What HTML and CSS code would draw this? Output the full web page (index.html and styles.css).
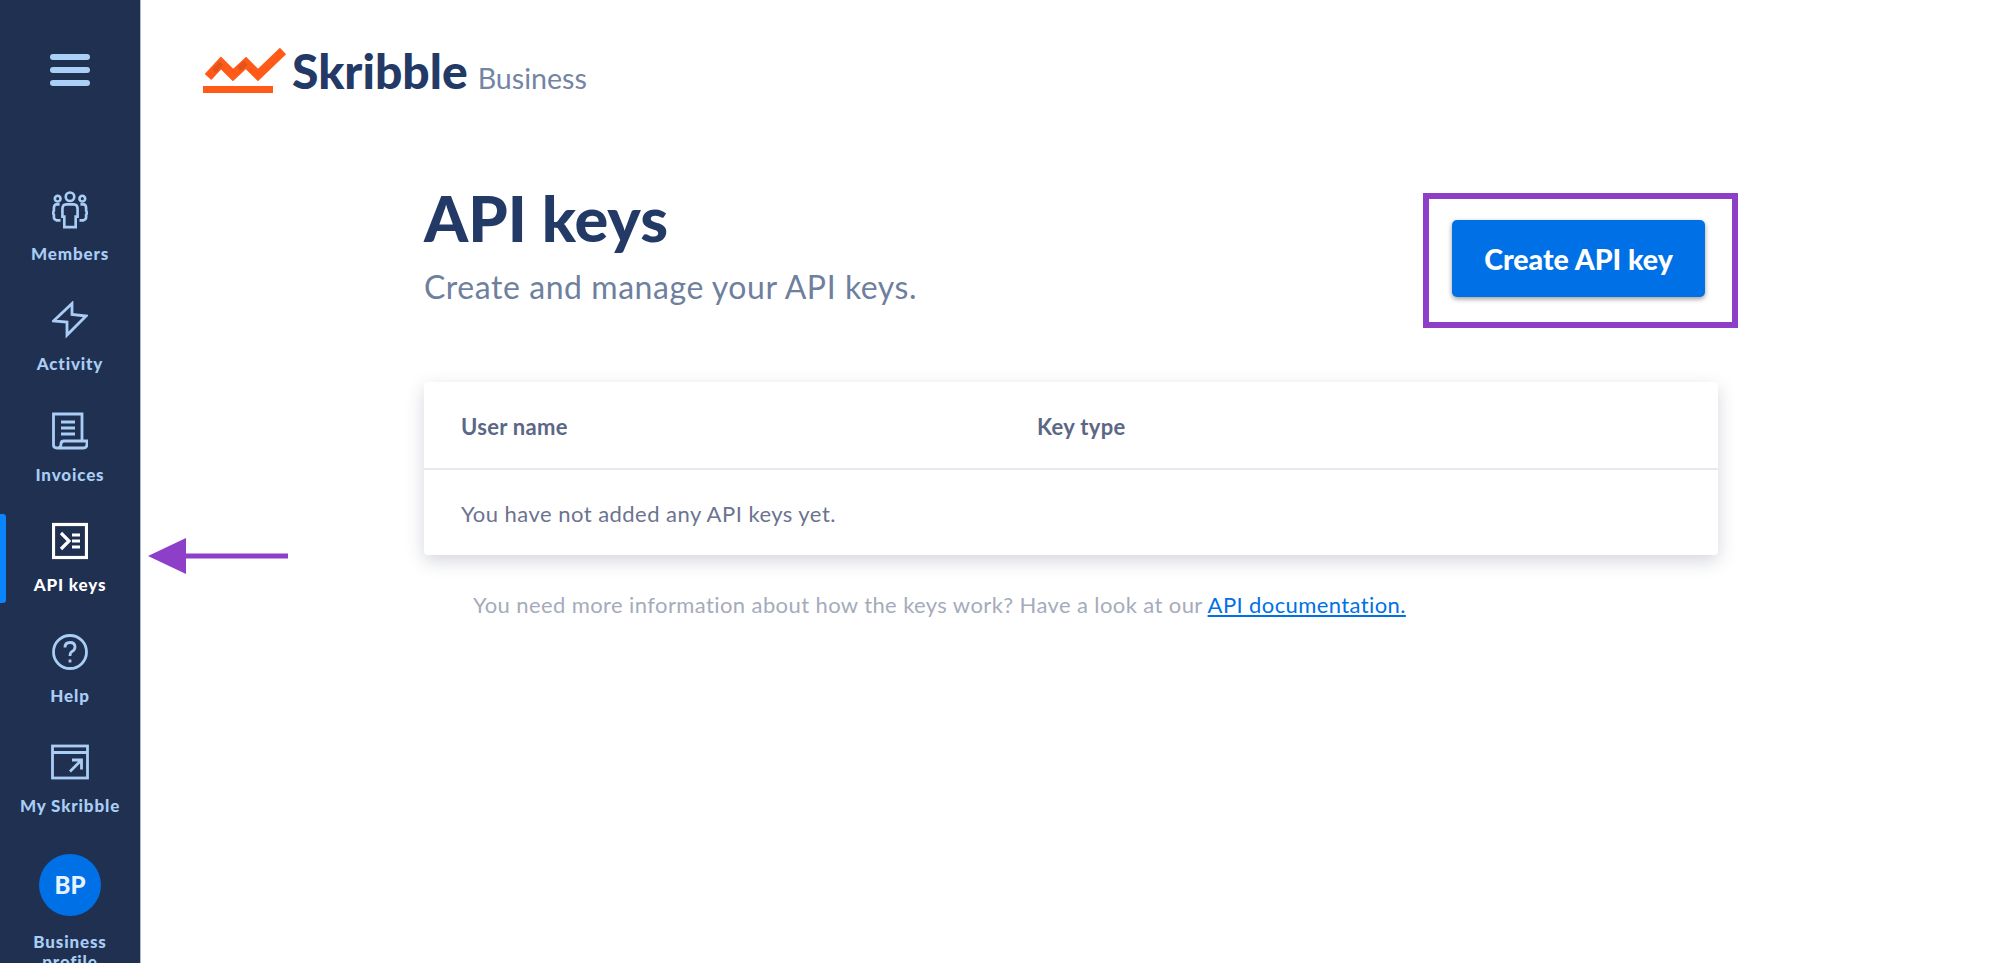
FILE: index.html
```html
<!DOCTYPE html>
<html lang="en">
<head>
    <meta charset="UTF-8">
    <meta name="viewport" content="width=device-width, initial-scale=1.0">
    <title>API keys - Skribble Business</title>
    <link rel="stylesheet" href="styles.css">
</head>
<body>
    <nav class="sidebar">
        <div class="menu-btn">
            <span></span>
            <span></span>
            <span></span>
        </div>
        <a class="nav-item">
            <svg class="nav-icon" viewBox="0 0 38 38">
                <circle cx="19" cy="5" r="4.5"/>
                <circle cx="6" cy="7" r="3"/>
                <circle cx="32" cy="7" r="3"/>
                <path d="M13 37V26H11V18Q11 13 15 13H23Q27 13 27 18V26H25V37Z"/>
                <path d="M8 13H5Q2 13 2 17V20L0.8 22L2 24V27Q2 29 5 30H9"/>
                <path d="M30 13H33Q36 13 36 17V20L37.2 22L36 24V27Q36 29 33 30H29"/>
            </svg>
            <span class="nav-label">Members</span>
        </a>
        <a class="nav-item">
            <svg class="nav-icon" viewBox="0 0 36 36">
                <path d="M20 1.500L1.500 19L15 20V33L34 14L20 12.500Z"/>
            </svg>
            <span class="nav-label">Activity</span>
        </a>
        <a class="nav-item">
            <svg class="nav-icon" viewBox="0 0 36 38">
                <path d="M1.500 33V2H30V29"/>
                <path d="M1.500 33Q1.500 36 5 36H31Q35 36 35 32V29H12Q9 29 9 32Q9 36 5 36"/>
                <path d="M9 10H23M9 16H23M9 22H23"/>
            </svg>
            <span class="nav-label">Invoices</span>
        </a>
        <a class="nav-item active">
            <svg class="nav-icon" viewBox="0 0 36 36">
                <rect x="1.500" y="1.500" width="33" height="33"/>
                <path d="M9 10L17 18L9 26"/>
                <path d="M20 12H28M20 18H28M20 24H28"/>
            </svg>
            <span class="nav-label">API keys</span>
        </a>
        <a class="nav-item">
            <svg class="nav-icon" viewBox="0 0 36 36">
                <circle cx="18" cy="18" r="16.500"/>
                <path d="M13 13.500Q13 8.500 18 8.500Q23 8.500 23 13Q23 16 20 17.500Q18 18.500 18 22"/>
                <path d="M18 25.500V28.500"/>
            </svg>
            <span class="nav-label">Help</span>
        </a>
        <a class="nav-item">
            <svg class="nav-icon wide" viewBox="0 0 38 35">
                <rect x="1.500" y="1.500" width="35" height="32"/>
                <path d="M1.500 8H36.500"/>
                <path d="M19 27L30 16M21 15.500H30.500V25"/>
            </svg>
            <span class="nav-label">My Skribble</span>
        </a>
        <a class="nav-item profile">
            <span class="avatar">BP</span>
            <span class="nav-label">Business profile</span>
        </a>
    </nav>

    <main class="main">
        <header class="brand">
            <svg class="brand-mark" viewBox="0 0 84 46">
                <path class="mark-line" d="M5 30L18 16L30 28L43 16L55 28L80 4"/>
                <path class="mark-shade" d="M11 24L18 16M36 22L43 16"/>
                <path class="mark-base" d="M0 39H70V46H0Z"/>
            </svg>
            <span class="brand-name">Skribble</span>
            <span class="brand-sub">Business</span>
        </header>

        <section class="page-head">
            <div>
                <h1>API keys</h1>
                <p class="subtitle">Create and manage your API keys.</p>
            </div>
            <div class="highlight">
                <button class="create-btn">Create API key</button>
            </div>
        </section>

        <section class="card">
            <div class="card-head">
                <span class="col-user">User name</span>
                <span>Key type</span>
            </div>
            <div class="card-row">You have not added any API keys yet.</div>
        </section>

        <p class="hint">You need more information about how the keys work? Have a look at our <a href="#">API documentation.</a></p>
    </main>

    <svg class="arrow" viewBox="0 0 140 36">
        <path d="M0 18L38 0V15.500H140V20.500H38V36Z"/>
    </svg>
</body>
</html>
```

FILE: styles.css
```css
* {
    box-sizing: border-box;
}
html, body {
    height: 100%;
}
body {
    margin: 0;
    display: flex;
    overflow: hidden;
    background-color: #fff;
    font-family: Lato, "Noto Sans", sans-serif;
}
.sidebar {
    width: 141px;
    height: 963px;
    flex-shrink: 0;
    overflow: hidden;
    background-color: #1f3050;
    border-right: 1px solid #aebcd0;
}
.menu-btn {
    width: 40px;
    height: 32px;
    margin: 54px auto 96.500px;
    display: flex;
    flex-direction: column;
    justify-content: space-between;
}
.menu-btn span {
    height: 6px;
    border-radius: 3px;
    background-color: #aad0f8;
}
.nav-item {
    position: relative;
    height: 89px;
    margin-bottom: 21.500px;
    padding-top: 8px;
    display: flex;
    flex-direction: column;
    align-items: center;
    color: #a9cdf5;
}
.nav-item.active {
    color: #fff;
}
.nav-item.active::before {
    content: "";
    position: absolute;
    left: 0;
    top: 0;
    bottom: 0;
    width: 6px;
    border-radius: 0 3px 3px 0;
    background-color: #0a84ff;
}
.nav-icon {
    width: 36px;
    height: 38px;
    fill: none;
    stroke: #a9cdf5;
    stroke-width: 2.800;
}
.nav-icon.wide {
    width: 38px;
}
.active .nav-icon {
    stroke: #fff;
    stroke-width: 3.200;
}
.nav-label {
    margin-top: 15px;
    font-size: 17px;
    line-height: 20px;
    font-weight: 900;
    letter-spacing: 0.85px;
    text-align: center;
    white-space: nowrap;
}
.profile .nav-label {
    margin-top: 16px;
    white-space: normal;
    width: 90px;
}
.avatar {
    width: 62px;
    height: 62px;
    flex-shrink: 0;
    border-radius: 50%;
    background-color: #0070e6;
    display: flex;
    align-items: center;
    justify-content: center;
    color: #e6f2ff;
    font-size: 24px;
    font-weight: 900;
}
.main {
    flex: 1;
    padding-left: 62px;
}
.brand {
    height: 193px;
    padding-top: 47px;
    display: flex;
    align-items: flex-start;
}
.brand-mark {
    width: 84px;
    height: 46px;
    flex-shrink: 0;
}
.mark-line {
    fill: none;
    stroke: #ff5a17;
    stroke-width: 9;
}
.mark-shade {
    fill: none;
    stroke: #e0531b;
    stroke-width: 5;
}
.mark-base {
    fill: #ff5a17;
}
.brand-name {
    margin-left: 5px;
    color: #243a66;
    font-size: 48px;
    line-height: 48px;
    font-weight: 900;
}
.brand-sub {
    margin-left: 10px;
    margin-top: 14px;
    color: #7484a3;
    font-size: 28.600px;
    line-height: 34px;
}
.page-head {
    width: 1294px;
    margin-left: 221px;
    display: flex;
    justify-content: space-between;
}
h1 {
    margin: -6px 0 0;
    color: #243a66;
    font-size: 63px;
    line-height: 62px;
    font-weight: 900;
}
.subtitle {
    margin: 20px 0 0;
    color: #6f7f9e;
    font-size: 32px;
    line-height: 36px;
    letter-spacing: 0.55px;
}
.highlight {
    width: 315px;
    height: 135px;
    margin-right: -20px;
    padding: 21px 27px 25px 23px;
    border: 6px solid #8e3fc8;
}
.create-btn {
    width: 253px;
    height: 77px;
    border: none;
    border-radius: 5px;
    background-color: #0070e6;
    box-shadow: 0 2px 5px rgba(0, 0, 0, 0.4);
    color: #fff;
    font-family: inherit;
    font-size: 28.500px;
    font-weight: 900;
}
.card {
    width: 1294px;
    margin: 54px 0 0 221px;
    border-radius: 4px;
    background-color: #fff;
    box-shadow: 0 6px 18px rgba(60, 70, 100, 0.22);
}
.card-head {
    height: 88px;
    padding: 2px 0 0 37px;
    display: flex;
    align-items: center;
    border-bottom: 2px solid #e8e9f0;
    color: #5b6785;
    font-size: 22px;
    font-weight: 700;
    letter-spacing: 0.3px;
}
.col-user {
    width: 576px;
}
.card-row {
    height: 85px;
    padding: 2px 0 0 37px;
    display: flex;
    align-items: center;
    color: #6b7390;
    font-size: 22px;
    letter-spacing: 0.47px;
}
.hint {
    margin: 37px 0 0 270px;
    color: #a5abbb;
    font-size: 22px;
    line-height: 26px;
    letter-spacing: 0.4px;
}
.hint a {
    color: #0070e6;
}
.arrow {
    position: absolute;
    left: 148px;
    top: 538px;
    width: 140px;
    height: 36px;
    fill: #8e3fc8;
}
```
